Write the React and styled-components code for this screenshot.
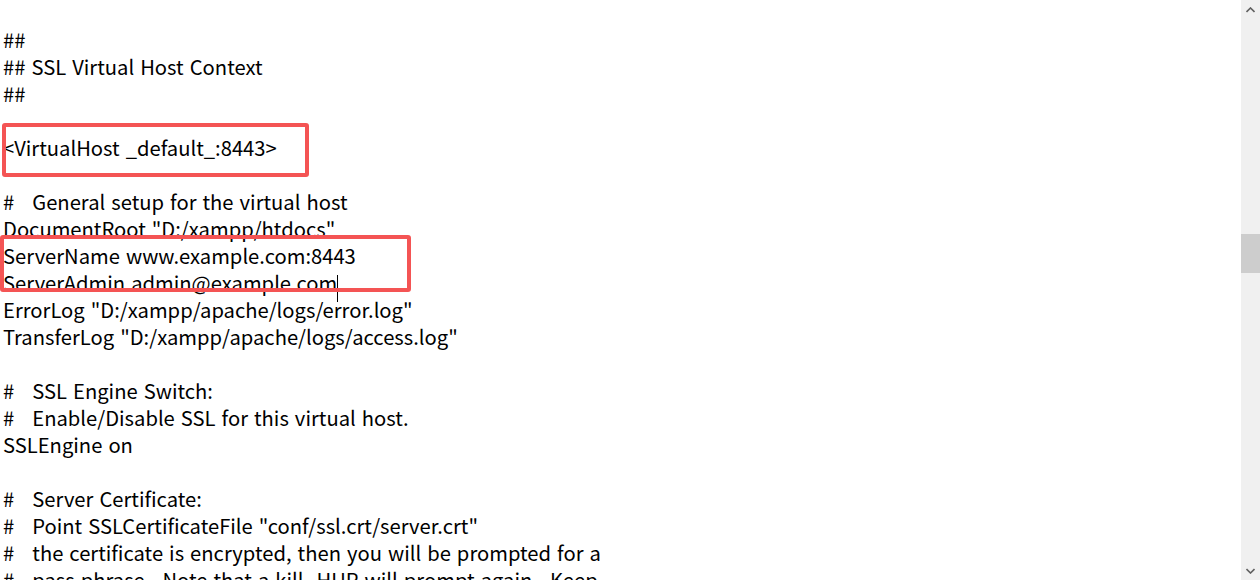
import React from 'react';
import styled, { createGlobalStyle } from 'styled-components';

const GlobalStyle = createGlobalStyle`
  html, body {
    margin: 0;
    padding: 0;
    background: #ffffff;
    overflow: hidden;
  }
`;

const Editor = styled.div`
  display: flex;
  width: 1260px;
  height: 580px;
  overflow: hidden;
  background: #ffffff;
`;

const TextArea = styled.div`
  flex: 1;
  padding: 0 0 0 3px;
  margin-top: -1px;
  font-family: 'Noto Sans CJK SC', 'Noto Sans', sans-serif;
  font-size: 20.2px;
  word-spacing: 1.5px;
  line-height: 27px;
  color: #000000;
  overflow: hidden;
`;

const Line = styled.div`
  height: 27px;
  white-space: pre;
`;

const Marked = styled.div`
  position: relative;

  &::after {
    content: '';
    position: absolute;
    top: ${p => p.$top}px;
    bottom: ${p => p.$bottom}px;
    left: ${p => p.$left}px;
    width: ${p => p.$width}px;
    border: 4px solid #f45454;
    border-radius: 3px;
    box-sizing: border-box;
    pointer-events: none;
  }
`;

const Caret = styled.span`
  display: inline-block;
  width: 1px;
  height: 27px;
  background: #000000;
  vertical-align: -11px;
`;

const Scrollbar = styled.div`
  width: 19px;
  display: flex;
  flex-direction: column;
  background: #f0f0f0;
`;

const ArrowButton = styled.div`
  height: 19px;
  display: flex;
  align-items: center;
  justify-content: center;
  color: #606060;
`;

const Track = styled.div`
  flex: 1;
  display: flex;
  flex-direction: column;
`;

const Thumb = styled.div`
  margin-top: ${p => p.$offset}px;
  height: ${p => p.$size}px;
  background: #cdcdcd;
`;

const Chevron = ({ down }) => (
  <svg width="9" height="6" viewBox="0 0 9 6">
    <path
      d={down ? 'M0.5 1 L4.5 5 L8.5 1' : 'M0.5 5 L4.5 1 L8.5 5'}
      fill="none"
      stroke="currentColor"
      strokeWidth="1.6"
    />
  </svg>
);

const before = [
  '',
  '##',
  '## SSL Virtual Host Context',
  '##',
  '',
];

const middle = [
  '',
  '#   General setup for the virtual host',
  'DocumentRoot "D:/xampp/htdocs"',
];

const after = [
  'ErrorLog "D:/xampp/apache/logs/error.log"',
  'TransferLog "D:/xampp/apache/logs/access.log"',
  '',
  '#   SSL Engine Switch:',
  '#   Enable/Disable SSL for this virtual host.',
  'SSLEngine on',
  '',
  '#   Server Certificate:',
  '#   Point SSLCertificateFile "conf/ssl.crt/server.crt"',
  '#   the certificate is encrypted, then you will be prompted for a',
  '#   pass phrase.  Note that a kill -HUP will prompt again.  Keep',
];

export default function App() {
  return (
    <>
      <GlobalStyle />
      <Editor>
        <TextArea>
          {before.map((t, i) => <Line key={'b' + i}>{t}</Line>)}
          <Marked $top={-11} $bottom={-16} $left={-1} $width={307}>
            <Line>{'<VirtualHost _default_:8443>'}</Line>
          </Marked>
          {middle.map((t, i) => <Line key={'m' + i}>{t}</Line>)}
          <Marked $top={-7} $bottom={4} $left={-3} $width={411}>
            <Line>ServerName www.example.com:8443</Line>
            <Line>ServerAdmin admin@example.com<Caret /></Line>
          </Marked>
          {after.map((t, i) => <Line key={'a' + i}>{t}</Line>)}
        </TextArea>
        <Scrollbar>
          <ArrowButton><Chevron /></ArrowButton>
          <Track>
            <Thumb $offset={215} $size={39} />
          </Track>
          <ArrowButton><Chevron down /></ArrowButton>
        </Scrollbar>
      </Editor>
    </>
  );
}
